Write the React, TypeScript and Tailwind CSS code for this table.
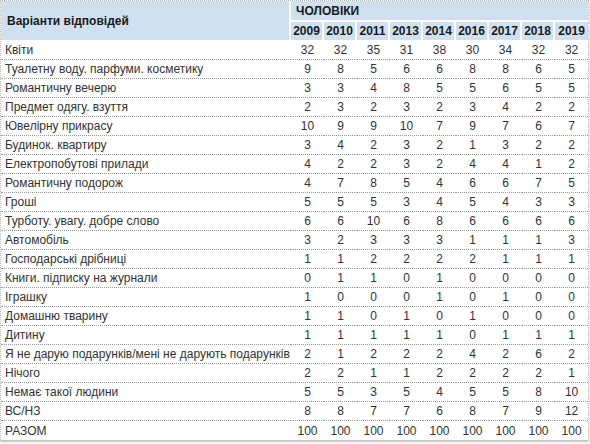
const YEARS = ["2009", "2010", "2011", "2013", "2014", "2016", "2017", "2018", "2019"];

const ROWS: [string, (number | string)[]][] = [
  ["Квіти", [32, 32, 35, 31, 38, 30, 34, 32, 32]],
  ["Туалетну воду. парфуми. косметику", [9, 8, 5, 6, 6, 8, 8, 6, 5]],
  ["Романтичну вечерю", [3, 3, 4, 8, 5, 5, 6, 5, 5]],
  ["Предмет одягу. взуття", [2, 3, 2, 3, 2, 3, 4, 2, 2]],
  ["Ювелірну прикрасу", [10, 9, 9, 10, 7, 9, 7, 6, 7]],
  ["Будинок. квартиру", [3, 4, 2, 3, 2, 1, 3, 2, 2]],
  ["Електропобутові прилади", [4, 2, 2, 3, 2, 4, 4, 1, 2]],
  ["Романтичну подорож", [4, 7, 8, 5, 4, 6, 6, 7, 5]],
  ["Гроші", [5, 5, 5, 3, 4, 5, 4, 3, 3]],
  ["Турботу. увагу. добре слово", [6, 6, 10, 6, 8, 6, 6, 6, 6]],
  ["Автомобіль", [3, 2, 3, 3, 3, 1, 1, 1, 3]],
  ["Господарські дрібниці", [1, 1, 2, 2, 2, 2, 1, 1, 1]],
  ["Книги. підписку на журнали", [0, 1, 1, 0, 1, 0, 0, 0, 0]],
  ["Іграшку", [1, 0, 0, 0, 1, 0, 1, 0, 0]],
  ["Домашню тварину", [1, 1, 0, 1, 0, 1, 0, 0, 0]],
  ["Дитину", [1, 1, 1, 1, 1, 0, 1, 1, 1]],
  ["Я не дарую подарунків/мені не дарують подарунків", [2, 1, 2, 2, 2, 4, 2, 6, 2]],
  ["Нічого", [2, 2, 1, 1, 2, 2, 2, 2, 1]],
  ["Немає такої людини", [5, 5, 3, 5, 4, 5, 5, 8, 10]],
  ["ВС/НЗ", [8, 8, 7, 7, 6, 8, 7, 9, 12]],
  ["РАЗОМ", [100, 100, 100, 100, 100, 100, 100, 100, 100]],
];

export default function App() {
  return (
    <div className="w-[590px] h-[444px] bg-white font-['Liberation_Sans',Arial,sans-serif] text-[12px] text-[#333]">
      <div className="w-[589px] border-t border-l border-r border-dotted border-[#b8b8b8] shadow-[0_2px_2px_rgba(0,0,0,0.25)]">
        <table className="w-full border-separate border-spacing-0 table-fixed">
          <colgroup>
            <col className="w-[290px]" />
            {YEARS.map((y) => (
              <col key={y} className="w-[33px]" />
            ))}
          </colgroup>
          <thead>
            <tr className="h-[21px]">
              <th
                rowSpan={2}
                className="bg-[#cfe0f0] border-r-2 border-b border-white pl-[6px] text-left font-bold text-[12px] text-[#1a1a1a]"
              >
                Варіанти відповідей
              </th>
              <th
                colSpan={9}
                className="bg-[#cfe0f0] border-b-2 border-white pl-[5px] pt-[1px] text-left font-bold text-[12px] text-[#1a1a1a]"
              >
                ЧОЛОВІКИ
              </th>
            </tr>
            <tr className="h-[19px]">
              {YEARS.map((y, i) => (
                <th
                  key={y}
                  className={`bg-[#cfe0f0] border-b border-white text-center font-bold text-[12px] text-[#1a1a1a] ${
                    i < YEARS.length - 1 ? "border-r-2" : ""
                  }`}
                >
                  {y}
                </th>
              ))}
            </tr>
          </thead>
          <tbody>
            {ROWS.map(([label, vals], r) => (
              <tr key={label} className="h-[19px]">
                <td
                  className={`pl-[4px] text-left whitespace-nowrap ${
                    r < ROWS.length - 1 ? "border-b border-dotted border-[#9a9a9a]" : ""
                  }`}
                >
                  {label}
                </td>
                {vals.map((v, i) => (
                  <td
                    key={i}
                    className={`text-center ${
                      r < ROWS.length - 1 ? "border-b border-dotted border-[#9a9a9a]" : ""
                    }`}
                  >
                    {v}
                  </td>
                ))}
              </tr>
            ))}
          </tbody>
        </table>
      </div>
    </div>
  );
}
